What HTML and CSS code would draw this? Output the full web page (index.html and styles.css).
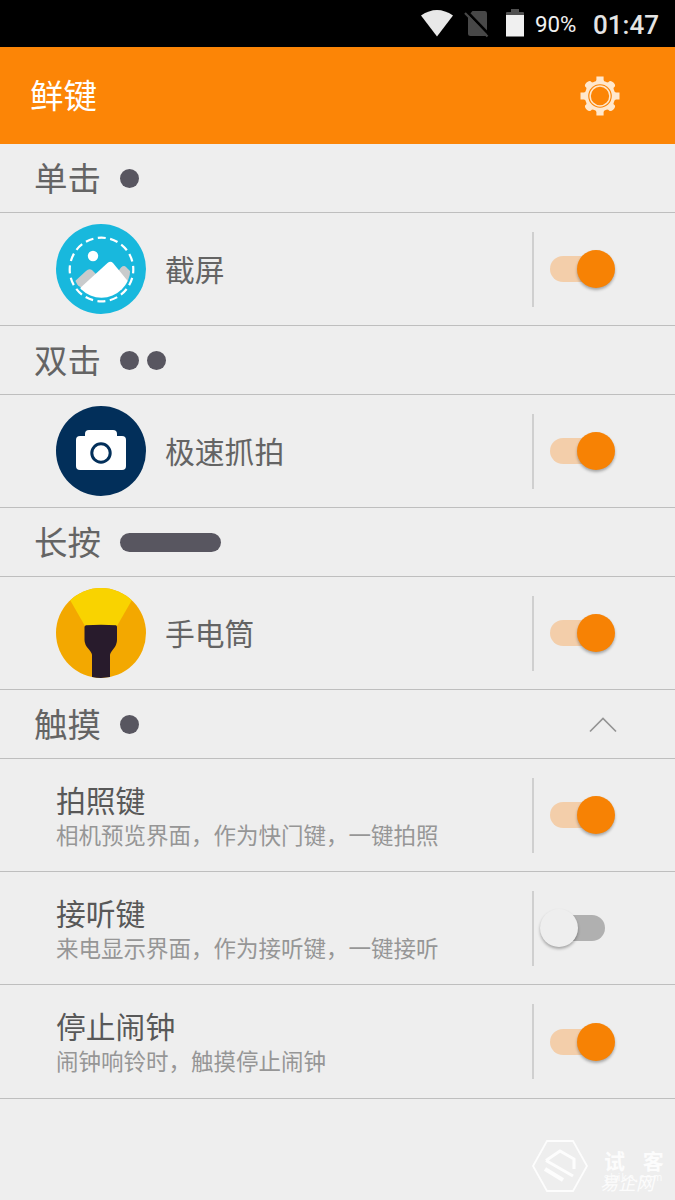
FILE: index.html
```html
<!DOCTYPE html>
<html lang="zh-CN">
<head>
<meta charset="utf-8">
<title>鲜键</title>
<link rel="stylesheet" href="styles.css">
</head>
<body>
<div class="screen">
  <div class="status">
    <svg class="wifi" width="34" height="28" viewBox="0 0 34 28"><path d="M1 6.500Q17-4.500 33 6.500L17 27.500z" fill="#e8e8e8"/></svg>
    <svg class="sim" width="26" height="28" viewBox="0 0 26 28"><path d="M8.500 1H21Q23 1 23 3.500V23.500Q23 26 20.500 26H6.500Q4 26 4 23.500V6z" fill="#484848"/><path d="M1.500 0L26 25.500" stroke="#000" stroke-width="2.600"/><path d="M1 3L23.500 26.500" stroke="#484848" stroke-width="2.200"/></svg>
    <svg class="battery" width="18" height="28" viewBox="0 0 18 28"><path d="M0 6V4Q0 3 1 3H5V0H13V3H17Q18 3 18 4V6z" fill="#505050"/><path d="M0 6H18V27.500H0z" fill="#f0f0f0"/></svg>
    <span class="percent">90%</span>
    <span class="clock">01:47</span>
  </div>
  <header class="appbar">
    <h1>鲜键</h1>
    <svg class="gear" width="40" height="40" viewBox="-20 -20 40 40">
      <g fill="#ffe8cd">
        <circle r="15.200"/>
        <path id="tooth" d="M-5-13L-3.600-16V-19.500H3.600V-16L5-13z"/>
        <use href="#tooth" transform="rotate(90)"/><use href="#tooth" transform="rotate(180)"/><use href="#tooth" transform="rotate(270)"/>
        <path id="lug" d="M-5.500-12.500L-3.800-15.500V-17Q-3.500-19 0-19Q3.500-19 3.800-17V-15.500L5.500-12.500z" transform="rotate(45)"/>
        <use href="#lug" transform="rotate(90)"/><use href="#lug" transform="rotate(180)"/><use href="#lug" transform="rotate(270)"/>
      </g>
      <circle r="11.800" fill="#fc8506"/><circle r="9.900" fill="none" stroke="#ffe8cd" stroke-width="1.500"/>
    </svg>
  </header>
  <main>
    <div class="section"><h2>单击</h2><i class="dot"></i></div>
    <div class="row">
      <svg class="icon" width="90" height="90" viewBox="0 0 90 90">
        <defs><clipPath id="disc"><circle cx="45.500" cy="45" r="28.800"/></clipPath></defs>
        <circle cx="45" cy="45" r="45" fill="#18b8dd"/>
        <circle cx="45.500" cy="45.500" r="31.800" fill="none" stroke="#fff" stroke-width="2.200" stroke-dasharray="8 4.490" stroke-dashoffset="4"/>
        <g clip-path="url(#disc)">
          <path d="M17 59L30 47Q33 44 36 46L42 52L30 66zM60 50L65 43.500Q68 41 70 43L78 51L72 62z" fill="#c9cbcc"/>
          <path d="M22 66L51.500 39Q54.500 36.500 57 39L75 61V80H22z" fill="#fff"/>
        </g>
        <circle cx="37" cy="32" r="5.200" fill="#fff"/>
      </svg>
      <span class="name">截屏</span><i class="rule"></i><span class="switch on"></span>
    </div>
    <div class="section"><h2>双击</h2><i class="dot"></i><i class="dot"></i></div>
    <div class="row">
      <svg class="icon" width="90" height="90" viewBox="0 0 90 90">
        <circle cx="45" cy="45" r="45" fill="#022f5a"/>
        <rect x="20" y="30" width="50" height="34" rx="4" fill="#fff"/><rect x="29" y="24" width="32" height="16" rx="4" fill="#fff"/>
        <circle cx="45" cy="47" r="9.200" fill="#fff" stroke="#022f5a" stroke-width="3"/>
      </svg>
      <span class="name">极速抓拍</span><i class="rule"></i><span class="switch on"></span>
    </div>
    <div class="section"><h2>长按</h2><i class="dot bar"></i></div>
    <div class="row">
      <svg class="icon" width="90" height="90" viewBox="0 0 90 90">
        <defs><clipPath id="lamp"><circle cx="45" cy="45" r="45"/></clipPath></defs>
        <g clip-path="url(#lamp)">
          <path d="M0 0H90V90H0z" fill="#f3a800"/>
          <path d="M6-2H84L61 38H29z" fill="#f9d300"/>
          <path d="M28.500 39Q28.500 37.800 30 37.300Q45 36 60 37.300Q61 37.800 61 39V52Q61 57 57 61.500Q54 65 54 67V90H36V67Q36 65 33 61.500Q28.500 57 28.500 52z" fill="#281b2c"/>
        </g>
      </svg>
      <span class="name">手电筒</span><i class="rule"></i><span class="switch on"></span>
    </div>
    <div class="section"><h2>触摸</h2><i class="dot"></i>
      <svg class="chevron" width="28" height="16" viewBox="0 0 28 16"><path d="M1 14.500L14 1.500L27 14.500" fill="none" stroke="#949494" stroke-width="1.700"/></svg>
    </div>
    <div class="row"><div class="text"><b>拍照键</b><small>相机预览界面，作为快门键，一键拍照</small></div><i class="rule"></i><span class="switch on"></span></div>
    <div class="row"><div class="text"><b>接听键</b><small>来电显示界面，作为接听键，一键接听</small></div><i class="rule"></i><span class="switch"></span></div>
    <div class="row last"><div class="text"><b>停止闹钟</b><small>闹钟响铃时，触摸停止闹钟</small></div><i class="rule"></i><span class="switch on"></span></div>
  </main>
  <div class="watermark">
    <svg width="58" height="54" viewBox="0 0 58 54" fill="none" stroke="#fdfdfd"><path d="M16 2H42L56 27L42 52H16L2 27z" stroke-width="1.800"/><path d="M15 21.500L29 12L43 20V30M15 21.500L42 37" stroke-width="3"/><path d="M14 30L32 41" stroke-width="4"/></svg>
    <div class="brand"><span class="brand-name">试 客</span><span class="brand-site">易企网<em>shike.com</em></span></div>
  </div>
</div>
</body>
</html>
```
FILE: styles.css
```css
* { box-sizing: border-box; }
body { margin: 0; background: #eeeeee; font-family: "Noto Sans CJK SC", sans-serif; color: #646464; }
.screen { position: relative; width: 675px; height: 1200px; overflow: hidden; }
svg { display: block; flex: none; }
h1, h2 { margin: 0; padding-bottom: 3px; font-weight: 400; font-size: 33.5px; line-height: 48px; }
.status { display: flex; height: 47px; background: #000; padding-left: 420px; color: #f0f0f0; font-family: Roboto, sans-serif; line-height: 48px; white-space: nowrap; }
.wifi { margin-top: 9px; }
.sim { margin: 10px 0 0 10px; }
.battery { margin: 9px 0 0 16px; }
.percent { margin-left: 11px; width: 58px; font-size: 22.3px; }
.clock { padding-top: 1px; font-size: 26px; font-weight: 500; color: #e4e4e4; }
.appbar { display: flex; align-items: center; justify-content: space-between; height: 97px; padding: 0 55px 0 30px; background: #fc8506; color: #fff; }
.section { display: flex; align-items: center; height: 69px; padding: 0 58px 0 34px; border-bottom: 1px solid #bebebe; }
.section h2 { width: 86px; }
.dot { width: 19px; height: 19px; margin-right: 8px; border-radius: 10px; background: #585660; }
.bar { width: 101px; }
.chevron { margin: 2px 0 0 auto; }
.row { display: flex; align-items: center; height: 113px; padding: 0 57px 0 56px; border-bottom: 1px solid #bebebe; }
.last { height: 114px; }
.name { margin-left: 19px; padding-bottom: 3px; font-size: 29.8px; line-height: 44px; }
.text { display: flex; flex-direction: column; }
.text b { font-weight: 400; font-size: 29.8px; line-height: 38px; color: #585858; }
.text small { font-size: 22.5px; line-height: 33px; color: #969696; }
.rule { width: 2px; height: 75px; margin-left: auto; background: #cfcfcf; }
.switch { position: relative; width: 84px; height: 38px; }
.switch::before { content: ""; position: absolute; left: 16px; top: 6px; width: 55px; height: 26px; border-radius: 13px; background: #b0b0b0; }
.switch::after { content: ""; position: absolute; left: 6px; top: 0; width: 38px; height: 38px; border-radius: 50%; background: #eeeeee; box-shadow: 0 2px 3px rgba(0,0,0,.3); }
.switch.on::before { background: #f3ceaa; }
.switch.on::after { left: 43px; background: #f78204; }
.watermark { position: absolute; left: 531px; top: 1139px; display: flex; color: #fcfcfc; }
.brand { display: flex; flex-direction: column; padding: 8px 0 0 15px; }
.brand-name { font-size: 21px; font-weight: 700; line-height: 27px; word-spacing: 13px; white-space: nowrap; }
.brand-site { position: relative; margin-left: -4px; font-size: 18px; line-height: 17px; font-style: italic; }
.brand-site em { position: absolute; left: 4px; top: -4px; font: 10px "Open Sans", sans-serif; letter-spacing: 1.4px; }
```
